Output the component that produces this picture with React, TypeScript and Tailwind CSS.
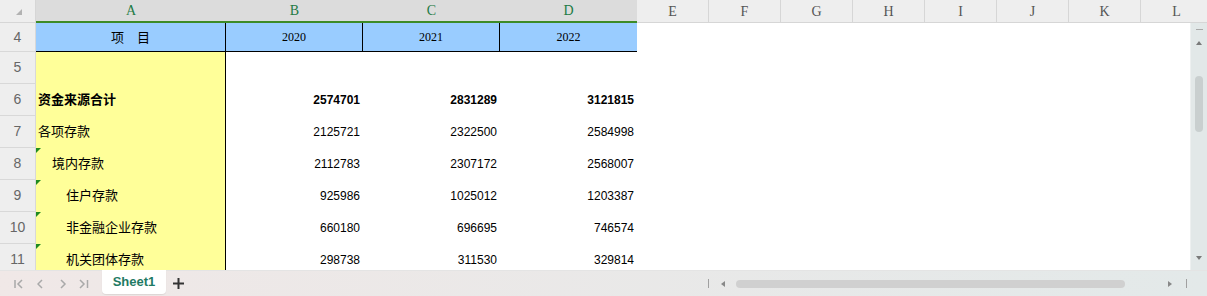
import React from "react";

type Row = { n: number; label: string; indent: number; bold?: boolean; tri?: boolean; v: string[] };

const rows: Row[] = [
  { n: 5, label: "", indent: 0, v: ["", "", ""] },
  { n: 6, label: "资金来源合计", indent: 0, bold: true, v: ["2574701", "2831289", "3121815"] },
  { n: 7, label: "各项存款", indent: 0, v: ["2125721", "2322500", "2584998"] },
  { n: 8, label: "境内存款", indent: 1, tri: true, v: ["2112783", "2307172", "2568007"] },
  { n: 9, label: "住户存款", indent: 2, tri: true, v: ["925986", "1025012", "1203387"] },
  { n: 10, label: "非金融企业存款", indent: 2, tri: true, v: ["660180", "696695", "746574"] },
  { n: 11, label: "机关团体存款", indent: 2, tri: true, v: ["298738", "311530", "329814"] },
];

const indentCls = ["pl-[2px]", "pl-[16px]", "pl-[30px]"];

function RowHead({ n }: { n: number }) {
  return (
    <div className="w-[36px] h-full shrink-0 bg-[#eeeeee] border-r border-b border-[#d8d8d8] flex items-center justify-center text-[14px] text-[#666] font-['Liberation_Sans',sans-serif]">
      {n}
    </div>
  );
}

export default function App() {
  const active = [
    { l: "A", w: "w-[190px]" },
    { l: "B", w: "w-[137px]" },
    { l: "C", w: "w-[137px]" },
    { l: "D", w: "w-[137px]" },
  ];
  const rest = ["E", "F", "G", "H", "I", "J", "K", "L"];
  return (
    <div className="w-[1207px] h-[296px] overflow-hidden flex flex-col bg-white font-['Liberation_Sans','Noto_Sans_CJK_SC',sans-serif] text-black">
      {/* column header */}
      <div className="flex h-[23px] shrink-0 overflow-hidden">
        <div className="w-[36px] h-full shrink-0 bg-[#eeeeee] border-r border-b border-[#d6d6d6] pl-[16px] pt-[9px]">
          <svg width="6" height="6" viewBox="0 0 6 6">
            <polygon points="6,0 6,6 0,6" fill="#b2b2b2" />
          </svg>
        </div>
        {active.map((c) => (
          <div
            key={c.l}
            className={`${c.w} h-full shrink-0 bg-[#dcdcdc] border-b-2 border-[#3d8b27] flex items-center justify-center text-[14px] text-[#1e7b45] font-['Liberation_Serif',serif]`}
          >
            {c.l}
          </div>
        ))}
        {rest.map((l) => (
          <div
            key={l}
            className="w-[72px] h-full shrink-0 bg-[#eeeeee] border-r border-b border-[#d6d6d6] flex items-center justify-center text-[14px] text-[#555] font-['Liberation_Serif',serif]"
          >
            {l}
          </div>
        ))}
      </div>

      {/* body */}
      <div className="flex flex-1 min-h-0">
        <div className="flex-1 overflow-hidden flex flex-col">
          {/* row 4 */}
          <div className="flex h-[29px] shrink-0">
            <RowHead n={4} />
            <div className="w-[190px] shrink-0 bg-[#99ccff] border-r border-b border-black flex items-center justify-center text-[13px] font-['Noto_Sans_CJK_SC',sans-serif]">
              项　目
            </div>
            {["2020", "2021", "2022"].map((y, i) => (
              <div
                key={y}
                className={`w-[137px] shrink-0 bg-[#99ccff] border-b border-black flex items-center justify-center text-[12px] font-['Liberation_Serif',serif] ${i < 2 ? "border-r" : ""}`}
              >
                {y}
              </div>
            ))}
          </div>
          {rows.map((r) => (
            <div key={r.n} className="flex h-[32px] shrink-0">
              <RowHead n={r.n} />
              <div
                className={`relative w-[190px] shrink-0 bg-[#ffff99] border-r border-black flex items-center text-[13px] ${indentCls[r.indent]} ${r.bold ? "font-bold" : ""}`}
              >
                {r.tri && (
                  <svg className="absolute left-0 top-0" width="5" height="5" viewBox="0 0 5 5">
                    <polygon points="0,0 5,0 0,5" fill="#1f8a1f" />
                  </svg>
                )}
                {r.label}
              </div>
              {r.v.map((v, i) => (
                <div
                  key={i}
                  className={`w-[137px] shrink-0 flex items-center justify-end pr-[3px] text-[12px] font-['Liberation_Sans',sans-serif] ${r.bold ? "font-bold" : ""}`}
                >
                  {v}
                </div>
              ))}
            </div>
          ))}
        </div>
        {/* vertical scrollbar */}
        <div className="w-[17px] shrink-0 bg-[#e2e8e8] border-l border-[#edf0f0] flex flex-col items-center pt-[6px] pb-[10px]">
          <div className="w-[7px] h-[1px] bg-[#a8a8a8]" />
          <svg className="mt-[11px]" width="6" height="4" viewBox="0 0 6 4">
            <polygon points="3,0 6,4 0,4" fill="#7a7a7a" />
          </svg>
          <div className="mt-[31px] w-[8px] h-[56px] rounded-full bg-[#c9cfcf]" />
          <svg className="mt-auto" width="6" height="4" viewBox="0 0 6 4">
            <polygon points="0,0 6,0 3,4" fill="#7a7a7a" />
          </svg>
        </div>
      </div>

      {/* bottom bar */}
      <div className="h-[26px] shrink-0 flex items-center bg-gradient-to-r from-[#f0e8e7] to-[#e3e9e9] border-t border-[#e4e4e4]">
        <svg className="ml-[14px]" width="10" height="10" viewBox="0 0 10 10" fill="none" stroke="#a9a9a9" strokeWidth="1.5">
          <line x1="1" y1="1" x2="1" y2="9" />
          <polyline points="8,1 4,5 8,9" />
        </svg>
        <svg className="ml-[13px]" width="7" height="10" viewBox="0 0 7 10" fill="none" stroke="#a9a9a9" strokeWidth="1.5">
          <polyline points="5,1 1,5 5,9" />
        </svg>
        <svg className="ml-[16px]" width="7" height="10" viewBox="0 0 7 10" fill="none" stroke="#a9a9a9" strokeWidth="1.5">
          <polyline points="1,1 5,5 1,9" />
        </svg>
        <svg className="ml-[12px]" width="10" height="10" viewBox="0 0 10 10" fill="none" stroke="#a9a9a9" strokeWidth="1.5">
          <polyline points="1,1 5,5 1,9" />
          <line x1="8.5" y1="1" x2="8.5" y2="9" />
        </svg>
        <div className="ml-[13px] self-start w-[64px] h-[24px] bg-white rounded-b-[4px] shadow-[0_1px_1px_rgba(0,0,0,0.08)] flex items-center justify-center text-[13px] font-bold text-[#1f7a64] font-['Liberation_Sans',sans-serif] -mt-px">
          Sheet1
        </div>
        <svg className="ml-[7px]" width="11" height="11" viewBox="0 0 11 11" stroke="#333" strokeWidth="2">
          <line x1="5.5" y1="0" x2="5.5" y2="11" />
          <line x1="0" y1="5.5" x2="11" y2="5.5" />
        </svg>
        <div className="ml-auto mr-[20px] flex items-center">
          <div className="w-px h-[9px] bg-[#a0a0a0]" />
          <svg className="ml-[12px]" width="4" height="6" viewBox="0 0 4 6">
            <polygon points="4,0 4,6 0,3" fill="#888" />
          </svg>
          <div className="ml-[11px] w-[389px] h-[8px] rounded-full bg-[#d0d0d0]" />
          <svg className="ml-[43px]" width="4" height="6" viewBox="0 0 4 6">
            <polygon points="0,0 4,3 0,6" fill="#888" />
          </svg>
          <div className="ml-[14px] w-px h-[9px] bg-[#a0a0a0]" />
        </div>
      </div>
    </div>
  );
}
